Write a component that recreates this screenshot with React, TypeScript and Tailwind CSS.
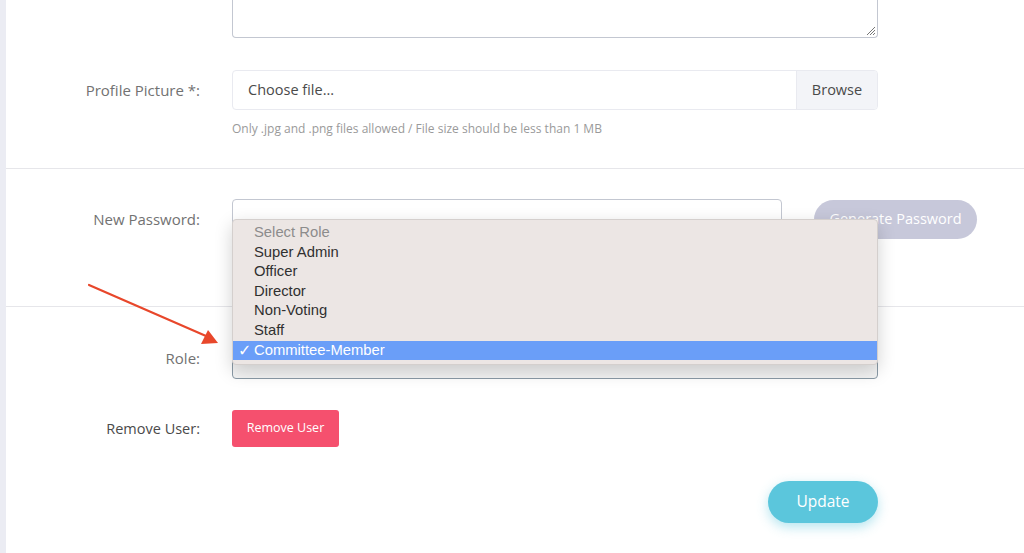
import React from "react";

const roles = ["Super Admin", "Officer", "Director", "Non-Voting", "Staff"];

const labelCls = "w-[194px] shrink-0 text-right text-[15px] font-medium text-[#727272]";

const RoleMenu: React.FC = () => {
  return (
    <div className="absolute left-[232px] top-[219px] w-[646px] rounded-[4px] border border-[#d4cfcd] bg-[#ece6e4] pt-[3px] pb-[4px] shadow-[0_6px_18px_rgba(0,0,0,0.18)] font-['Liberation_Sans',Arial,sans-serif] text-[14.8px] leading-[19.6px] text-[#303030]">
      <div className="pl-[21px] text-[#8c8c8c]">Select Role</div>
      {roles.map((r) => (
        <div key={r} className="pl-[21px]">
          {r}
        </div>
      ))}
      <div className="flex bg-[#6a9ef8] text-white">
        <span className="w-[21px] pl-[5px] font-['DejaVu_Sans',sans-serif] text-[16px] leading-[19.6px]">✓</span>
        <span>Committee-Member</span>
      </div>
    </div>
  );
};

const Arrow: React.FC = () => (
  <svg className="absolute left-0 top-0" width="240" height="360" viewBox="0 0 240 360">
    <line x1="89" y1="285" x2="206" y2="336" stroke="#e8472b" strokeWidth="2.2" strokeLinecap="round" />
    <polygon points="218,343 201,344 208,330" fill="#e8472b" />
  </svg>
);

export default function App() {
  return (
    <div className="relative flex h-[553px] w-[1024px] overflow-hidden bg-white font-['Open_Sans',sans-serif]">
      <div className="w-[6px] shrink-0 bg-[#ebecf3]" />
      <div className="flex flex-1 flex-col">
        {/* textarea tail */}
        <div className="flex">
          <div className="w-[194px] shrink-0" />
          <div className="relative ml-[32px] h-[38px] w-[646px] rounded-b-[4px] border-x border-b border-[#c3c7d1]">
            <svg className="absolute bottom-[1px] right-[1px]" width="11" height="11" viewBox="0 0 11 11">
              <path d="M10 2 L2 10 M10 5 L5 10 M10 8 L8 10" stroke="#777" strokeWidth="1" />
            </svg>
          </div>
        </div>

        {/* profile picture */}
        <div className="mt-[32px] flex items-center">
          <div className={labelCls}>Profile Picture *:</div>
          <div className="ml-[32px] flex h-[40px] w-[646px] overflow-hidden rounded-[4px] border border-[#e9eaf0]">
            <div className="flex flex-1 items-center pl-[15px] text-[14.5px] text-[#4a4a4a]">Choose file...</div>
            <div className="flex w-[81px] items-center justify-center border-l border-[#e9eaf0] bg-[#f3f4f8] text-[14.5px] text-[#4a4a4a]">
              Browse
            </div>
          </div>
        </div>
        <div className="ml-[226px] mt-[10px] text-[12px] text-[#9a9a9a]">
          Only .jpg and .png files allowed / File size should be less than 1 MB
        </div>

        <div className="mt-[30px] h-px bg-[#e6e6ea]" />

        {/* new password */}
        <div className="mt-[30px] flex items-center">
          <div className={labelCls}>New Password:</div>
          <div className="ml-[32px] h-[40px] w-[550px] rounded-[4px] border border-[#c3c7d1]" />
          <button className="ml-[32px] h-[39px] w-[163px] rounded-full bg-[#c7c8da] text-[14.5px] text-white">
            Generate Password
          </button>
        </div>

        <div className="mt-[67px] h-px bg-[#e6e6ea]" />

        {/* role */}
        <div className="mt-[31px] flex items-center">
          <div className={labelCls}>Role:</div>
          <div className="ml-[32px] h-[41px] w-[646px] rounded-[4px] border border-[#8a9aa6] bg-[#f4f4f4]" />
        </div>

        {/* remove user */}
        <div className="mt-[31px] flex items-center">
          <div className="w-[194px] shrink-0 text-right text-[14.5px] text-[#4a4a4a]">Remove User:</div>
          <button className="ml-[32px] h-[37px] w-[107px] rounded-[3px] bg-[#f5506e] text-[12.5px] text-white">
            Remove User
          </button>
        </div>

        {/* update */}
        <div className="mt-[34px] flex">
          <button className="ml-[762px] h-[42px] w-[110px] rounded-full bg-[#5bc6dc] text-[15.5px] text-white shadow-[0_4px_12px_rgba(91,198,220,0.45)]">
            Update
          </button>
        </div>
      </div>

      <RoleMenu />
      <Arrow />
    </div>
  );
}
